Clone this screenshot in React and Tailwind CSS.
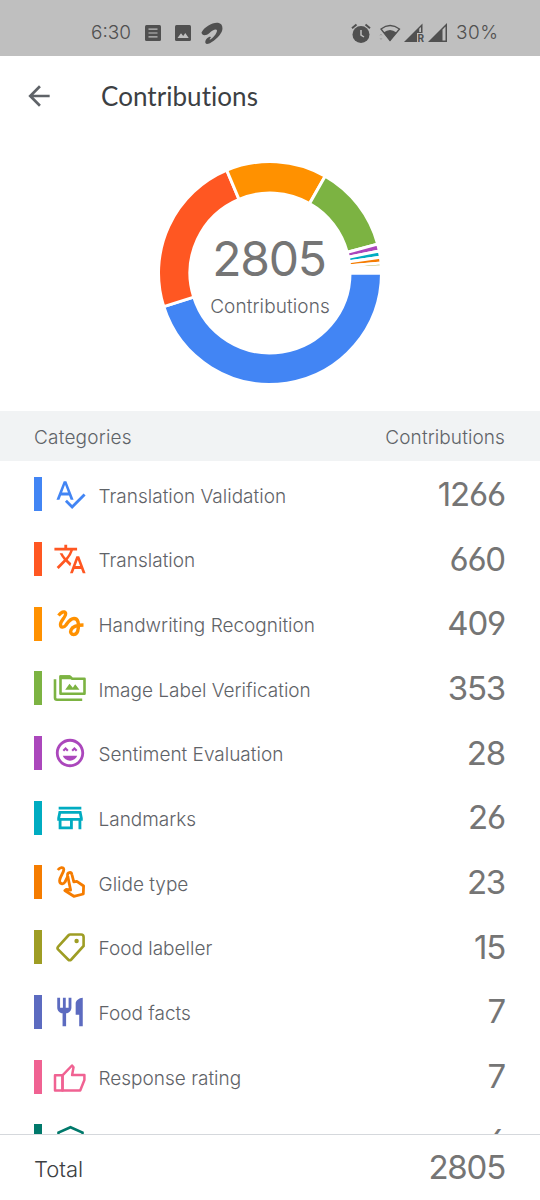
import {
  MdArrowBack,
  MdOutlineSentimentVerySatisfied,
  MdOutlineStore,
  MdRestaurant,
  MdSpellcheck,
  MdTranslate,
} from "react-icons/md";

const categories = [
  { id: 1, name: "Translation Validation", count: 1266, color: "#4285f4", icon: MdSpellcheck },
  { id: 2, name: "Translation", count: 660, color: "#ff5722", icon: MdTranslate },
  { id: 3, name: "Handwriting Recognition", count: 409, color: "#ff9100", icon: ScribbleIcon },
  { id: 4, name: "Image Label Verification", count: 353, color: "#7cb342", icon: MediaIcon },
  { id: 5, name: "Sentiment Evaluation", count: 28, color: "#ab47bc", icon: MdOutlineSentimentVerySatisfied },
  { id: 6, name: "Landmarks", count: 26, color: "#00acc1", icon: MdOutlineStore },
  { id: 7, name: "Glide type", count: 23, color: "#f57c00", icon: GlideIcon },
  { id: 8, name: "Food labeller", count: 15, color: "#9e9d24", icon: TagIcon },
  { id: 9, name: "Food facts", count: 7, color: "#5c6bc0", icon: MdRestaurant },
  { id: 10, name: "Response rating", count: 7, color: "#f06292", icon: ThumbIcon },
  { id: 11, name: "", count: 6, color: "#00796b", icon: HexIcon },
  { id: 12, name: "", count: 5, color: "#795548", icon: HexIcon },
];

const VISIBLE_ROWS = 11;

const total = categories.reduce((sum, c) => sum + c.count, 0);

export default function App() {
  return (
    <div className="flex h-[1200px] w-[540px] flex-col overflow-hidden bg-white font-['Inter',sans-serif] font-light text-[#5f6368]">
      <StatusBar />

      {/* Header */}
      <header className="flex h-20 shrink-0 items-center pl-[23px]">
        <MdArrowBack className="size-8 text-[#5f6368]" />
        <h1 className="ml-[46px] font-['Lato',sans-serif] text-[26px] font-normal tracking-[0.05px] text-[#3c4043] [font-variant-ligatures:none]">
          Contributions
        </h1>
      </header>

      {/* Chart */}
      <section className="grid h-[275px] shrink-0 place-items-center pb-0.5">
        <Donut />
      </section>

      {/* Table */}
      <div className="flex h-[50px] shrink-0 items-center justify-between bg-[#f1f3f4] pl-[34px] pr-[35px] pt-[5px] text-[19px]">
        <span className="tracking-[0.2px]">Categories</span>
        <span className="tracking-[0.1px]">Contributions</span>
      </div>
      <ul className="min-h-0 flex-1 overflow-hidden pt-px">
        {categories.slice(0, VISIBLE_ROWS).map((c) => (
          <CategoryRow key={c.id} category={c} />
        ))}
      </ul>

      {/* Total */}
      <footer className="flex h-[66px] shrink-0 items-center justify-between border-t border-[#d5d8dc] pl-[34px] pr-[35px]">
        <span className="pt-1 text-[22px] text-[#3c4043]">Total</span>
        <Count value={total} />
      </footer>
    </div>
  );
}

function CategoryRow({ category }) {
  const Icon = category.icon;
  return (
    <li className="flex h-[64.7px] items-center pl-[34px] pr-[35px]" style={{ color: category.color }}>
      <span className="h-[34px] w-2 bg-current" />
      <Icon className="ml-[10.5px] size-[34px]" />
      <span className="ml-3 flex-1 pt-[5px] text-[19px] text-[#5f6368]">{category.name}</span>
      <Count value={category.count} />
    </li>
  );
}

function Count({ value }) {
  return (
    <span className="text-[33px] font-normal leading-none tracking-[-1.2px] text-[#757575] [font-feature-settings:'cv03','cv04']">
      {value}
    </span>
  );
}

/* ---------------- CHART ---------------- */

function ringSlice(start, end) {
  const outer = 111.5;
  const inner = 80;
  const point = (r, a) => `${r * Math.cos(a)} ${r * Math.sin(a)}`;
  const large = end - start > Math.PI ? 1 : 0;
  return `M${point(outer, start)}A${outer} ${outer} 0 ${large} 1 ${point(outer, end)}L${point(inner, end)}A${inner} ${inner} 0 ${large} 0 ${point(inner, start)}Z`;
}

function Donut() {
  let angle = 0;
  const slices = categories.map((c) => {
    const start = angle;
    angle += (c.count / total) * Math.PI * 2;
    return { color: c.color, d: ringSlice(start, angle) };
  });

  return (
    <div className="grid place-items-center">
      <svg viewBox="-113 -113 226 226" className="col-start-1 row-start-1 size-[226px]">
        {slices.map((s) => (
          <path key={s.d} d={s.d} fill={s.color} stroke="#fff" strokeWidth="3" />
        ))}
      </svg>
      <div className="col-start-1 row-start-1 flex flex-col items-center pt-1.5">
        <span className="mr-0.5 text-[48px] font-normal leading-[60px] tracking-[-1.2px] text-[#757575]">{total}</span>
        <span className="mt-1 text-[19px] tracking-[0.1px]">Contributions</span>
      </div>
    </div>
  );
}

/* ---------------- STATUS BAR ---------------- */

function StatusBar() {
  return (
    <div className="flex h-14 shrink-0 items-center bg-[#bfbfbf] pl-[91px] pt-[9px] text-[19px] text-[#505050]">
      <span className="w-[54px] pt-0.5">6:30</span>
      <svg viewBox="0 0 16 16" className="size-4">
        <rect width="16" height="16" rx="1.5" fill="currentColor" />
        <path d="M3.5 4.2h9M3.5 8h9M3.5 11.8h9" stroke="#bfbfbf" strokeWidth="1.2" />
      </svg>
      <svg viewBox="0 0 16 16" className="ml-3.5 size-4">
        <rect width="16" height="16" rx="1.5" fill="currentColor" />
        <path d="M2.5 13 6 8.2l2.2 2.7L10.3 8l3.4 5z" fill="#bfbfbf" />
      </svg>
      <svg viewBox="0 0 22 22" className="ml-2.5 size-[22px]">
        <path
          d="M.5 10.5C3 5 12 0 17 .8c5 .7 5.500 6.200 3 10.200C16.500 17 9 22 6 22c-3-.500-2-5 2-7 1.500-.500 2.500 0 1.500 1-1.500 1.500-1 2 .500 1 3-2 6-6 6-8.500C15.500 6.500 11.500 8 8.500 11 5 14 1 14 .5 10.500z"
          fill="currentColor"
        />
      </svg>
      <svg viewBox="0 0 20 20" className="ml-[128px] size-5" fill="none" stroke="currentColor">
        <circle cx="10" cy="11.5" r="8.5" fill="currentColor" stroke="none" />
        <path d="M1 5.2 5.500 1.500M19 5.200 14.500 1.500" strokeWidth="2" />
        <path d="M10 7v5l3 2" stroke="#bfbfbf" strokeWidth="1.5" />
      </svg>
      <svg viewBox="0 0 22 18" className="ml-2 h-[18px] w-[22px]" fill="none" stroke="currentColor">
        <path d="M2 5Q11-2 20.500 5L11 16.500z" strokeWidth="1.3" />
        <path d="M4.500 8.500q6.500-5 13 0L11 17z" fill="currentColor" stroke="none" />
        <path d="M1 11.500 2 10l1 1.500M1 14l1 1.500L3 14" strokeWidth="1" opacity=".25" />
      </svg>
      <div className="relative ml-[3px] h-[19px] w-[19px]">
        <svg viewBox="0 0 19 19" className="size-[19px]">
          <path fillRule="evenodd" d="M0 19 18.500.500v9.500H13v9zM15.200 5.800v3.200h1.800V4z" fill="currentColor" />
        </svg>
        <span className="absolute -bottom-px -right-px text-[10px] font-bold leading-[9px]">R</span>
      </div>
      <svg viewBox="0 0 19 19" className="ml-[5px] size-[19px]">
        <path fillRule="evenodd" d="M0 19 19 0v19zM14.500 6.500V17.500h3V3.500z" fill="currentColor" />
      </svg>
      <span className="ml-[9px] pt-0.5 tracking-[0.5px]">30%</span>
    </div>
  );
}

/* ---------------- CATEGORY ICONS ---------------- */

function ScribbleIcon({ className }) {
  return (
    <svg viewBox="0 0 34 34" className={className} fill="none" stroke="currentColor" strokeWidth="3.4">
      <path d="M5.500 8.500C8 5.500 11.500 3.500 12.500 6c1.300 3.200-5 7.500-5 11.500 0 3.200 3 3.700 5.500.5 2-2.700 4-6.500 8-6.500 4.500 0 4.700 5.500 4.300 9.500-.400 4-2.300 6.500-4.600 6.500-2.400 0-3.700-2.300-2.700-4.500 1.500-3.500 7-5 12.500-5" />
    </svg>
  );
}

function MediaIcon({ className }) {
  return (
    <svg viewBox="0 0 34 34" className={className} fill="none" stroke="currentColor" strokeWidth="2.6" strokeLinejoin="round">
      <path d="M2 8.300v18.400q0 2 2 2h25.200" />
      <path d="M7.500 5.500H17l2 2.200h12.500v15h-24z" />
      <path d="M6.700 4.200h10l3 4h-13z" fill="currentColor" stroke="none" />
      <path d="m12.200 18.800 4.300-6.100 3.300 4 2.400-3.400 4.300 5.500z" fill="currentColor" stroke="none" />
    </svg>
  );
}

function GlideIcon({ className }) {
  return (
    <svg viewBox="0 0 34 34" className={className} fill="none" stroke="currentColor" strokeWidth="2.8" strokeLinejoin="round">
      <path d="M4.800 5C6.800 2.500 10.500 1.300 10.800 4.500c.200 2.800-4 7.200-4.200 11-.100 3.500 3.500 4.500 5.400 1.500l3-6" />
      <path d="M17.600 25 14.600 10.500c-.500-3.500 3.700-4 4.300-1L20.800 16.800l3-.500 6.800 4.700-.300 8-9.500 2.300-9-5.800 1.500-1.200z" />
    </svg>
  );
}

function TagIcon({ className }) {
  return (
    <svg viewBox="0 0 34 34" className={className} fill="none" stroke="currentColor" strokeWidth="2.6">
      <path d="M17.300 4.500h10.800q2.500 0 2.500 2.500v9L18.300 29.500q-1.600 1.600-3.200 0L5.300 19.700q-1.500-1.600-.100-3.200L15.300 5.500q.900-1 2-1z" />
      <circle cx="23.600" cy="11" r="2.200" fill="currentColor" stroke="none" />
    </svg>
  );
}

function ThumbIcon({ className }) {
  return (
    <svg viewBox="0 0 34 34" className={className} fill="none" stroke="currentColor" strokeWidth="2.5" strokeLinejoin="round">
      <path d="M9.500 30.500H2V15.300h7.500z" />
      <path d="M9.500 15.300 19 5.500l1.500 1.800-1.400 7.800h12.300V20l-4.200 10.500H9.500z" />
    </svg>
  );
}

function HexIcon({ className }) {
  return (
    <svg viewBox="0 0 34 34" className={className} fill="none" stroke="currentColor" strokeWidth="2.6">
      <path d="M5.500 25.500V8.500l12-5.300 12 5.300v17l-12 5.500z" />
    </svg>
  );
}
